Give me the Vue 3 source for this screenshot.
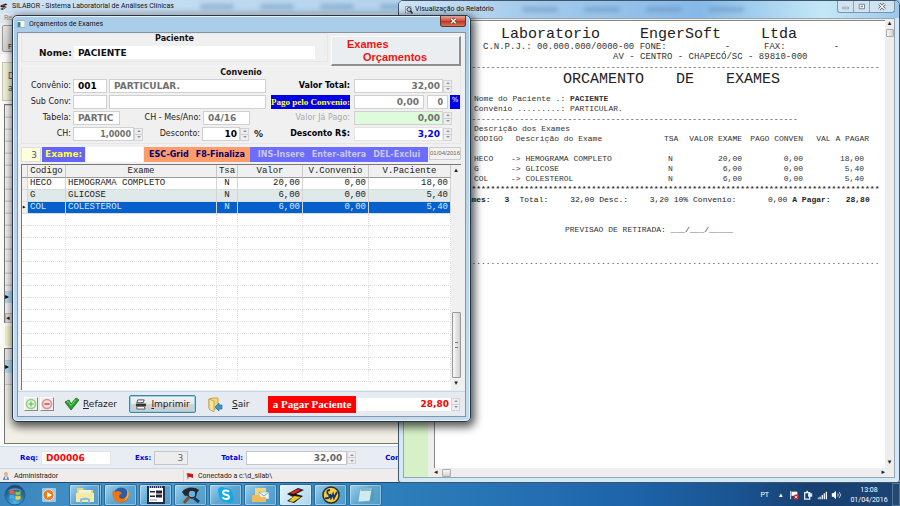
<script setup>
import { reactive } from 'vue'

const form = reactive({
  nome: 'PACIENTE',
  convCod: '001',
  convNome: 'PARTICULAR.',
  subCod: '',
  subNome: '',
  tabela: 'PARTIC',
  mesAno: '04/16',
  ch: '1,0000',
  desconto: '10',
  valorTotal: '32,00',
  pagoConv: '0,00',
  pagoPerc: '0',
  jaPago: '0,00',
  descontoRs: '3,20',
  exame: '',
  pagar: '28,80',
  req: 'D00006',
  exs: '3',
  total: '32,00'
})

const exames = [
  { cod: 'HECO', nome: 'HEMOGRAMA COMPLETO', tsa: 'N', valor: '20,00', conv: '0,00', pac: '18,00' },
  { cod: 'G', nome: 'GLICOSE', tsa: 'N', valor: '6,00', conv: '0,00', pac: '5,40' },
  { cod: 'COL', nome: 'COLESTEROL', tsa: 'N', valor: '6,00', conv: '0,00', pac: '5,40' }
]
const selected = 2
const emptyRows = 14
</script>

<template>
  <div class="desktop">
    <main class="app">
      <header class="app-title">
        <svg class="ico8" viewBox="0 0 16 16"><path d="M1 5L11 1 15 3 8 6 14 8 5 14 0 12 7 9 1 8z" fill="#222" /><path d="M2 5L11 2 7 6z" fill="#e02020" /><path d="M7 9L13 8 4 13z" fill="#f0c020" /></svg>
        <span>SILABOR - Sistema Laboratorial de Análises Clínicas</span>
        <i class="smudge"></i><i class="smudge"></i><i class="smudge"></i><i class="smudge"></i>
      </header>
      <nav class="app-menu">Re</nav>
      <div class="app-tools"><span class="tool">F</span></div>
      <div class="app-info">D<br />a</div>
      <div class="app-list">
        <div class="list-rows"></div>
        <div class="marker">▸</div>
        <div class="list-gap"></div>
        <div class="list-scroll">◂</div>
      </div>
      <div class="app-strip"></div>
      <div class="app-canvas"><div class="canvas-head"></div><div class="marker">▸</div><div class="canvas-head"></div></div>
      <section class="app-totals">
        <label for="req">Req:</label><input id="req" v-model="form.req" class="f-req" />
        <label for="exs" class="l-exs">Exs:</label><input id="exs" v-model="form.exs" class="f-exs" />
        <label for="total" class="l-total">Total:</label><input id="total" v-model="form.total" class="f-total" />
        <span class="spin"><button aria-label="Mais"></button><button aria-label="Menos"></button></span>
        <span class="l-con">Con</span>
      </section>
      <footer class="app-status">
        <div class="st-user">
          <svg class="ico8" viewBox="0 0 16 16"><circle cx="8" cy="4" r="4" fill="#e8b070" /><path d="M2 16c0-6 3-8 6-8s6 2 6 8z" fill="#6f8fd0" /><path d="M8 8l-2 3 2 5 2-5z" fill="#fff" /></svg>
          Administrador
        </div>
        <div class="st-conn">
          <svg class="ico8" viewBox="0 0 16 16"><path d="M2 2l12 2v8L8 10l-5 1z" fill="#d01818" /><path d="M2 2l2 13" stroke="#777" stroke-width="1.5" /></svg>
          Conectado a c:\d_silab\
        </div>
      </footer>
    </main>

    <section class="report">
      <header class="rep-title">
        <svg class="ico8" viewBox="0 0 16 16"><path d="M1 1h11v13H1z" fill="#e9eef5" stroke="#557" /><circle cx="8" cy="7" r="4" fill="#bfe0f5" stroke="#223" stroke-width="1.6" /><path d="M11 10l4 5" stroke="#223" stroke-width="2.5" /></svg>
        <span>Visualização do Relatório</span>
        <div class="rep-smudges"><i class="smudge"></i><i class="smudge"></i><i class="smudge"></i><i class="smudge"></i></div>
        <div class="win-btns">
          <button aria-label="Minimizar"><svg viewBox="0 0 20 12"><path d="M6 7h8v2H6z" fill="#fff" stroke="#678" stroke-width=".8" /></svg></button>
          <button aria-label="Maximizar"><svg viewBox="0 0 20 12"><path d="M7 3h7v6H7zM9.500 5.500h2v1h-2z" fill="#fff" stroke="#567" /></svg></button>
          <button aria-label="Fechar"><svg viewBox="0 0 20 12"><path d="M7 3l6 6M13 3l-6 6" stroke="#567" stroke-width="3" /><path d="M7 3l6 6M13 3l-6 6" stroke="#fff" stroke-width="1.200" /></svg></button>
        </div>
      </header>
      <div class="rep-body">
        <aside class="rep-side"></aside>
        <div class="rep-view">
          <article class="paper">
            <h1 class="r-lab"><span>Laboratorio</span><span>EngerSoft</span><span>Ltda</span></h1>
            <p class="r-cnpj"><span>C.N.P.J.: 00.000.000/0000-00 FONE:</span><span>-</span><span>FAX:</span><span>-</span></p>
            <p class="r-addr">AV - CENTRO - CHAPECÓ/SC - 89810-000</p>
            <div class="r-line">{{ '-'.repeat(88) }}</div>
            <h2 class="r-orc"><span>ORCAMENTO</span><span>DE</span><span>EXAMES</span></h2>
            <p class="r-ind">Nome do Paciente .: <b>PACIENTE</b></p>
            <p class="r-ind">Convênio .........: PARTICULAR.</p>
            <div class="r-line">{{ '-'.repeat(71) }}</div>
            <p class="r-ind">Descrição dos Exames</p>
            <table class="r-table">
              <thead>
                <tr><th class="c1">CODIGO</th><th class="c2">&nbsp;Descrição do Exame</th><th class="c3">TSA</th><th class="c4">VALOR EXAME</th><th class="c5">PAGO CONVEN</th><th class="c6">VAL A PAGAR</th></tr>
              </thead>
              <tbody>
                <tr v-for="e in exames" :key="e.cod">
                  <td>{{ e.cod }}</td><td>-&gt; {{ e.nome }}</td><td>{{ e.tsa }}</td><td class="n">{{ e.valor }}</td><td class="n">{{ e.conv }}</td><td class="n last">{{ e.pac }}</td>
                </tr>
              </tbody>
            </table>
            <div class="r-line stars">{{ '*'.repeat(88) }}</div>
            <p class="r-total">
              <b>Exames:</b><b>3</b><span>Total:</span><span class="t1">32,00</span><span>Desc.:</span><span class="t2">3,20 10%</span><span>Convenio:</span><span class="t3">0,00</span><b>A Pagar:</b><b>28,80</b>
            </p>
            <p class="r-prev">PREVISAO DE RETIRADA: ___/___/_____</p>
            <div class="r-line dots">{{ '.'.repeat(88) }}</div>
          </article>
          <div class="hscroll"><span>◂</span><i></i><span class="end">▸</span></div>
        </div>
        <div class="vscroll"><span>▴</span><i></i><span class="end">▾</span></div>
      </div>
    </section>

    <section class="dialog">
      <header class="dlg-title">
        <svg class="ico8" viewBox="0 0 16 14"><path d="M0 0h16v14H0z" fill="#f4f8fa" stroke="#789" /><path d="M1 3h6v10H1z" fill="#3a8a80" /></svg>
        <span>Orçamentos de Exames</span>
        <button class="close" aria-label="Fechar"><svg viewBox="0 0 26 11"><path d="M11 3l5 5M16 3l-5 5" stroke="#633" stroke-width="3" /><path d="M11 3l5 5M16 3l-5 5" stroke="#fff" stroke-width="1.500" /></svg></button>
      </header>
      <div class="client">
        <div class="top">
          <fieldset class="pac">
            <div class="cap">Paciente</div>
            <div class="pac-row"><label for="nome">Nome:</label><input id="nome" v-model="form.nome" /></div>
          </fieldset>
          <button class="banner"><span>Exames</span><span class="b2">Orçamentos</span></button>
        </div>
        <fieldset class="conv">
          <div class="cap">Convenio</div>
          <div class="cols">
            <div class="left">
              <div class="row"><label class="lab" for="cc">Convênio:</label><input id="cc" v-model="form.convCod" class="w34" /><input v-model="form.convNome" aria-label="Nome do convênio" class="grow dis" /></div>
              <div class="row"><label class="lab" for="sc">Sub Conv:</label><input id="sc" v-model="form.subCod" class="w34 dis" /><input v-model="form.subNome" aria-label="Nome do sub convênio" class="grow dis" /></div>
              <div class="row"><label class="lab" for="tb">Tabela:</label><input id="tb" v-model="form.tabela" class="w46 dis" /><label class="lab2" for="ma">CH - Mes/Ano:</label><input id="ma" v-model="form.mesAno" class="w46 dis" /></div>
              <div class="row">
                <label class="lab" for="ch">CH:</label><span class="num w70"><input id="ch" v-model="form.ch" class="small dis" /><span class="spin"><button aria-label="Mais"></button><button aria-label="Menos"></button></span></span>
                <label class="lab3" for="de">Desconto:</label><span class="num w46"><input id="de" v-model="form.desconto" /><span class="spin"><button aria-label="Mais"></button><button aria-label="Menos"></button></span></span><b class="pct">%</b>
              </div>
            </div>
            <div class="right">
              <div class="row"><label class="rl" for="vt">Valor Total:</label><span class="num w98"><input id="vt" v-model="form.valorTotal" class="dis" /><span class="spin"><button aria-label="Mais"></button><button aria-label="Menos"></button></span></span></div>
              <div class="row"><label class="rl pago" for="pc">Pago pelo Convenio:</label><input id="pc" v-model="form.pagoConv" class="w70 dis r" /><input v-model="form.pagoPerc" aria-label="Percentual" class="w21 small dis r" /><span class="bluepct">%</span></div>
              <div class="row"><label class="rl faded" for="jp">Valor Já Pago:</label><span class="num w98"><input id="jp" v-model="form.jaPago" class="dis green" /><span class="spin"><button aria-label="Mais"></button><button aria-label="Menos"></button></span></span></div>
              <div class="row"><label class="rl" for="dr">Desconto R$:</label><span class="num w98"><input id="dr" v-model="form.descontoRs" class="blue" /><span class="spin"><button aria-label="Mais"></button><button aria-label="Menos"></button></span></span></div>
            </div>
          </div>
        </fieldset>
        <div class="bar">
          <span class="count">3</span>
          <label class="exl" for="ex">Exame:</label>
          <input id="ex" v-model="form.exame" class="exi" />
          <span class="keys1"><span>ESC-Grid</span><span>F8-Finaliza</span></span>
          <span class="keys2"><span>INS-Insere</span><span>Enter-altera</span><span>DEL-Exclui</span></span>
          <span class="date">01/04/2016</span>
        </div>
        <div class="gridbox">
          <table class="grid">
            <colgroup><col class="g0" /><col class="g1" /><col /><col class="g3" /><col class="g4" /><col class="g5" /><col class="g6" /></colgroup>
            <thead><tr><th></th><th>Codigo</th><th>Exame</th><th>Tsa</th><th>Valor</th><th>V.Convenio</th><th>V.Paciente</th></tr></thead>
            <tbody>
              <tr v-for="(e, i) in exames" :key="e.cod" :class="{ alt: i === 1, sel: i === selected }">
                <td class="ind">{{ i === selected ? '▸' : '' }}</td><td>{{ e.cod }}</td><td>{{ e.nome }}</td><td class="c">{{ e.tsa }}</td><td class="r">{{ e.valor }}</td><td class="r">{{ e.conv }}</td><td class="r">{{ e.pac }}</td>
              </tr>
              <tr v-for="n in emptyRows" :key="n" class="empty"><td></td><td></td><td></td><td></td><td></td><td></td><td></td></tr>
            </tbody>
          </table>
          <div class="gscroll"><span>▴</span><i></i><span>▾</span></div>
        </div>
        <div class="foot">
          <button class="mini" aria-label="Adicionar"><svg viewBox="0 0 12 12"><circle cx="6" cy="6" r="4.500" fill="#e4f5de" stroke="#8fcf80" stroke-width="1.500" /><path d="M6 3.500v5M3.500 6h5" stroke="#7cc46c" stroke-width="1.500" /></svg></button>
          <button class="mini" aria-label="Remover"><svg viewBox="0 0 12 12"><circle cx="6" cy="6" r="4.500" fill="#f5dcdc" stroke="#d99090" stroke-width="1.500" /><path d="M3.500 6h5" stroke="#cc7070" stroke-width="2" /></svg></button>
          <button class="flat refazer"><svg viewBox="0 0 15 14"><path d="M1 5l4-2 2 4 5-6 3 2-8 10z" fill="#27a22a" stroke="#126a16" stroke-width=".8" /><path d="M3 5l1.500-.5 2.500 4 5-6" fill="none" stroke="#7be070" /></svg><span><u>R</u>efazer</span></button>
          <button class="print"><svg viewBox="0 0 12 12"><path d="M3 1h7l-1 3H2z" fill="#fff" stroke="#444" /><path d="M1 5h11v3H1z" fill="#333" /><path d="M2 8h8l1 3H2z" fill="#f4f4f4" stroke="#555" /></svg><span><u>I</u>mprimir</span></button>
          <button class="flat sair"><svg viewBox="0 0 15 15"><path d="M1 2l4-1h5v11H5l-4-1z" fill="#f2d777" stroke="#b89a40" stroke-width=".8" /><path d="M1 2l5 2v11l-5-3z" fill="#f8e49a" stroke="#b89a40" stroke-width=".8" /><path d="M7 10l4-4v2h3v4h-3v2z" fill="#3c92cc" stroke="#1d659c" stroke-width=".6" /></svg><span><u>S</u>air</span></button>
          <label class="pagar" for="pg">a Pagar Paciente</label>
          <span class="num payn"><input id="pg" v-model="form.pagar" class="red" /><span class="spin"><button aria-label="Mais"></button><button aria-label="Menos"></button></span></span>
        </div>
      </div>
    </section>

    <footer class="taskbar">
      <button class="orb" aria-label="Iniciar"><svg viewBox="0 0 22 22"><defs><radialGradient id="og" cx=".5" cy=".9" r=".9"><stop offset="0" stop-color="#48b8ec" /><stop offset="1" stop-color="#153f70" /></radialGradient></defs><circle cx="11" cy="11" r="10" fill="url(#og)" stroke="#2a6090" /><path d="M5.500 7c2-1 3-1 5 0v3.500c-2-1-3-1-5 0z" fill="#e8602c" /><path d="M11.500 7.300c2 .8 3 .8 5-.3v3.500c-2 1-3 1-5 .2z" fill="#8cc63e" /><path d="M5.500 11.500c2-1 3-1 5 0V15c-2-1-3-1-5 0z" fill="#4aa8e8" /><path d="M11.500 11.800c2 .8 3 .8 5-.3V15c-2 1-3 1-5 .2z" fill="#f8cc3c" /><path d="M3 8a9 7 0 0 1 16 0c-5-3-11-3-16 0z" fill="#fff" opacity=".35" /></svg></button>
      <button class="play" aria-label="Player"><svg viewBox="0 0 16 16"><rect x="1" y="1" width="14" height="14" rx="1" fill="#9cc8e8" /><circle cx="7.500" cy="8" r="5.500" fill="#ef7a1a" stroke="#fff" stroke-width=".6" /><path d="M6 5l5 3-5 3z" fill="#fff" /></svg></button>
      <button class="tb stack" aria-label="Explorer"><svg viewBox="0 0 20 18"><path d="M2 2h6l1 2h9v12H2z" fill="#f2d375" /><path d="M4 4h12v5H4z" fill="#e8f4dc" /><path d="M1 7h18v9H1z" fill="#fae9a4" /><path d="M5 17v-4q5-3 10 0v4h-2v-3H7v3z" fill="#7cc3ea" /></svg></button>
      <button class="tb" aria-label="Firefox"><svg viewBox="0 0 20 18"><circle cx="10" cy="9" r="7.500" fill="#2b5ea8" /><path d="M2 4c1 2 2 2 4 1 3 0 4 1 5 3-2 0-3 1-3 3 2 3 6 2 8-2 1-3 0-5-1-6 3 2 4 6 2 9-3 6-11 6-14 1-2-3-2-6-1-9z" fill="#ee7416" /><path d="M16 3c3 4 2 10-3 12 3-3 4-7 3-12z" fill="#f9b52c" /></svg></button>
      <button class="tb" aria-label="Formulário"><svg viewBox="0 0 20 18"><path d="M2 1h16v16H2z" fill="#fff" stroke="#222a50" stroke-width="2" /><path d="M3 1h14" stroke="#ccc" stroke-width="1.500" stroke-dasharray="1 1" /><path d="M4 5h5v1.500H4zM4 9.500h5V11H4z" fill="#223" /><path d="M10 6h6M10 10h6" stroke="#223" stroke-width="3" /><path d="M4 14h7" stroke="#99a" /></svg></button>
      <button class="tb" aria-label="Pesquisa"><svg viewBox="0 0 20 18"><path d="M1 6c3-5 12-6 17-2l-3 4-6 1-5 1z" fill="#26282f" /><circle cx="11" cy="8" r="4" fill="#6ab1dc" stroke="#222" stroke-width="1.500" /><path d="M8 11l-5 6" stroke="#8a4a25" stroke-width="3" /><path d="M13 12l5 4" stroke="#273858" stroke-width="3" /></svg></button>
      <button class="tb" aria-label="Skype"><svg viewBox="0 0 20 18"><circle cx="10" cy="9" r="7" fill="#13a9e6" /><circle cx="6" cy="5" r="4" fill="#13a9e6" /><circle cx="14" cy="13" r="4" fill="#13a9e6" /><path d="M13 6c-1-2-6-2-6 .5 0 3 6 1.500 6 4.500 0 2.500-5 2.500-6.500.2" fill="none" stroke="#fff" stroke-width="2" /></svg></button>
      <button class="tb" aria-label="E-mail"><svg viewBox="0 0 20 18"><path d="M4 2h11v11H4z" fill="#f3d67c" /><path d="M8 6h10v7H8z" fill="#e9f4fb" stroke="#7aa" stroke-width=".5" /><path d="M8 6l5 4 5-4" fill="none" stroke="#7ab" /><path d="M1 9h7l2 2h5v5H1z" fill="#f0b95c" /></svg></button>
      <button class="tb active" aria-label="Silabor"><svg viewBox="0 0 20 18"><path d="M1 8L12 2l6 2-8 4 7 2-9 7-7-2 6-4z" fill="#1b1616" /><path d="M3 7l9-4 3 1-7 4z" fill="#dd2a1c" /><path d="M8 10l7 1-8 5-4-1z" fill="#ebcb22" /></svg></button>
      <button class="tb" aria-label="SW"><svg viewBox="0 0 20 18"><circle cx="10" cy="9" r="8" fill="#f6cd38" stroke="#2b2b24" stroke-width="1.500" /><path d="M9 4c-4 0-3 4-1 5s0 4-4 3M9 8l1 4 2-4 1 4 3-6" fill="none" stroke="#17356c" stroke-width="1.800" /></svg></button>
      <button class="tb" aria-label="Notas"><svg viewBox="0 0 20 18"><path d="M4 3l12-1-2 13-12 1z" fill="#cfeaf0" stroke="#6aa4b8" stroke-width=".6" /><path d="M14 15l2-13 2 3v10z" fill="#5f97ad" /><path d="M5 3l10-1-.3 3H4.700z" fill="#82b8c8" /></svg></button>
      <div class="tray">
        <span class="pt">PT</span>
        <span class="up">▴</span>
        <svg viewBox="0 0 12 12"><path d="M2 1v10" stroke="#fff" /><path d="M3 2h7v5H3z" fill="#fff" /><circle cx="8.500" cy="8.500" r="3.200" fill="#d32020" /><path d="M7 7l3 3M10 7l-3 3" stroke="#fff" /></svg>
        <svg viewBox="0 0 12 12"><path d="M2 3h6v8H2z" fill="none" stroke="#e8eef4" stroke-width="1.500" /><path d="M4 1h2v2H4zM6 4h5v4H6z" fill="#dfe7ef" /><path d="M8 8v3" stroke="#dfe7ef" /></svg>
        <svg viewBox="0 0 12 12"><path d="M1 9h1v2H1zM3 8h1.500v3H3zM5.500 6H7v5H5.500zM8 4h1.500v7H8zM10.500 2H12v9h-1.500z" fill="#fff" /></svg>
        <svg viewBox="0 0 12 12"><path d="M1 4h2l3-3v10L3 8H1z" fill="#fff" /><path d="M8 4q1.500 2 0 4M10 2.500q3 3.500 0 7" fill="none" stroke="#dce8f4" /></svg>
        <div class="clock">13:08<br />01/04/2016</div>
      </div>
      <button class="peek" aria-label="Mostrar área de trabalho"></button>
    </footer>
  </div>
</template>

<style>
body { overflow: hidden; }
</style>

<style scoped>
* { box-sizing: border-box; }
.desktop { position: relative; height: 100vh; display: flex; flex-direction: column; overflow: hidden; font-family: "DejaVu Sans", sans-serif; font-size: 8px; line-height: 10px; color: #222; }
p, h1, h2 { margin: 0; font-weight: normal; }
button, input { font: inherit; color: inherit; margin: 0; padding: 0; border: 0; border-radius: 0; min-width: 0; }
button { background: none; }
svg { display: block; flex: none; }
fieldset { border: 1px solid #e6e6e6; margin: 0; padding: 0; min-width: 0; }
i { display: block; font-style: normal; }
.ico8 { width: 8px; height: 8px; }

/* main application */
.app { flex: 1; min-height: 0; display: flex; flex-direction: column; background: #fbfcfa; }
.app-title { flex: none; height: 13px; display: flex; align-items: center; gap: 4px; background: linear-gradient(90deg, #cfe3f4, #b4d4ee 40%, #9ec6ea); font: 7px/13px Roboto, sans-serif; color: #111; }
.smudge { width: 34px; height: 5px; margin-left: 22px; border-radius: 3px; background: #5f86ac; opacity: .45; filter: blur(2px); }
.app-menu { flex: none; height: 10px; padding-left: 4px; font: 7px/10px Roboto, sans-serif; color: #888; background: #dfe6ee; }
.app-tools { flex: none; height: 31px; padding: 2px; background: #ececec; }
.tool { display: block; width: 40px; height: 27px; padding: 17px 0 0 5px; border: 1px solid #999; border-radius: 2px; background: linear-gradient(#e6e6e6, #cfcfcf); font: 7px/9px Roboto, sans-serif; }
.app-info { flex: none; height: 39px; margin: 8px 2px 3px; padding: 8px 5px; border: 1px solid #c8c8b0; background: #efeed8; line-height: 12px; color: #555; }
.app-list { flex: none; height: 219px; margin-left: 4px; border: 1px solid #777; border-width: 1px 0 0 1px; background: #f2f2f2; display: flex; flex-direction: column; }
.list-rows { flex: 1; width: 9px; background: repeating-linear-gradient(#d2d2d2 0 1px, #f2f2f2 1px 11px, #e0e0e0 11px 12px); border-right: 1px solid #ccc; }
.marker { width: 9px; height: 12px; background: #b4dcee; color: #000; font-size: 8px; line-height: 12px; }
.list-gap { height: 10px; }
.list-scroll { height: 10px; width: 12px; background: #ddd; border: 1px solid #bbb; font-size: 7px; line-height: 8px; }
.app-strip { flex: none; height: 20px; margin: 3px 0 2px 5px; background: #f4f3c6; }
.app-canvas { flex: 1; margin: 0 0 2px 4px; border: 1px solid #777; border-width: 1px 0 1px 1px; background: #f2efe4; }
.canvas-head { width: 9px; height: 12px; background: #e8e8e8; border-bottom: 1px solid #c6c6c6; }
.app-totals { flex: none; height: 23px; display: flex; align-items: center; padding-left: 20px; border: 1px solid #c6dcec; border-width: 1px 0; background: #e7edf2; font-size: 7px; font-weight: bold; color: #0000e0; }
.app-totals input { height: 14px; border: 1px solid #c6c6c6; background: #fff; color: #666; text-align: right; padding: 0 4px; font-size: 9px; margin-left: 3px; }
.app-totals .f-req { width: 70px; color: #f00; text-align: left; border-color: #e4e4e4; }
.app-totals .f-exs { width: 34px; background: #ededed; font-weight: normal; }
.app-totals .f-total { width: 101px; }
.l-exs { margin-left: 24px; }
.l-total { margin-left: 33px; }
.l-con { margin-left: 29px; }
.app-status { flex: none; height: 13px; display: flex; align-items: center; background: #f0ecec; font: 7px/12px Roboto, sans-serif; }
.st-user, .st-conn { display: flex; align-items: center; gap: 4px; padding-left: 2px; }
.st-user { width: 184px; border-right: 1px solid #d8d4d4; }

/* spin buttons */
.spin { flex: none; width: 9px; height: 13px; display: flex; flex-direction: column; background: #eee; border: 1px solid #d4d4d4; }
.spin button { flex: 1; display: flex; align-items: center; justify-content: center; }
.spin button::before { content: ""; border: 2px solid transparent; border-top: 0; border-bottom-color: #8d95a8; }
.spin button + button { border-top: 1px solid #ccc; }
.spin button + button::before { border: 2px solid transparent; border-bottom: 0; border-top-color: #8d95a8; }

/* report preview window */
.report { position: absolute; left: 398px; right: 0; top: 0; bottom: 23px; display: flex; flex-direction: column; border: 1px solid #40556a; border-radius: 5px 5px 3px 3px; background: #d5e8f5; padding: 0 4px 4px; }
.rep-title { flex: none; height: 17px; margin: 0 -4px; padding-left: 6px; display: flex; align-items: center; gap: 2px; background: linear-gradient(90deg, #cfe4f4, #a4cbec 25%, #86b9e8 60%, #c4e8f6 85%, #9cc8ee); border-radius: 4px 4px 0 0; font: 7px/17px Roboto, sans-serif; color: #111; }
.rep-smudges { flex: 1; display: flex; }
.rep-smudges .smudge { margin-left: 26px; width: 36px; }
.win-btns { display: flex; align-self: flex-start; margin-right: 4px; border: 1px solid #7e95a8; border-top: 0; border-radius: 0 0 3px 3px; background: #cfe3f0; }
.win-btns button { width: 16px; height: 11px; border-right: 1px solid #8ea3b4; }
.win-btns button:last-child { width: 24px; border: 0; }
.win-btns svg { width: 100%; height: 11px; }
.rep-body { flex: 1; min-height: 0; display: flex; border: 1px solid #98a4ae; background: #eee; }
.rep-side { width: 24px; flex: none; background: #d6f0c8; }
.rep-view { flex: 1; min-width: 0; margin-left: 6px; display: flex; flex-direction: column; }
.paper { flex: 1; min-height: 0; overflow: hidden; margin-top: 1px; padding: 7px 2px 0 22px; border: 1px solid #888; border-width: 1px 0 0 1px; background: #fff; font: 8px/10px "Liberation Mono", monospace; color: #333; white-space: pre; }
.r-lab, .r-orc { display: flex; font-size: 15px; line-height: 14px; color: #222; }
.r-lab { margin-left: 44px; gap: 40px; }
.r-orc { margin: 1px 0 7px 106px; gap: 32px; }
.r-cnpj { display: flex; font-size: 9px; padding-left: 26px; }
.r-cnpj span:nth-child(2) { margin-left: 58px; }
.r-cnpj span:nth-child(3) { margin-left: 34px; }
.r-cnpj span:nth-child(4) { margin-left: 48px; }
.r-addr { font-size: 9px; padding-left: 156px; }
.r-line { height: 10px; color: #333; }
.r-line.stars { font-weight: bold; }
.r-line.dots { margin-top: 22px; }
.r-ind { padding-left: 17px; }
.r-table { table-layout: fixed; border-collapse: collapse; margin-left: 17px; width: 395px; }
.r-table th, .r-table td { padding: 0; height: 10px; font-weight: normal; text-align: left; }
.r-table thead th { height: 20px; vertical-align: top; }
.r-table .c1 { width: 37px; }
.r-table .c3 { width: 17px; }
.r-table .c4, .r-table .c5 { width: 61px; text-align: right; }
.r-table .c6 { width: 66px; text-align: right; }
.r-table td:nth-child(3) { padding-left: 4px; }
.r-table .n { text-align: right; }
.r-table .last { padding-right: 5px; }
.r-total { display: flex; gap: 5px; margin-top: 1px; color: #222; }
.r-total > :nth-child(2) { margin: 0 5px 0 9px; }
.r-total .t1 { width: 41px; text-align: right; }
.r-total .t2 { width: 55px; text-align: right; }
.r-total .t3 { width: 46px; text-align: right; }
.r-total > :last-child { margin-left: 10px; }
.r-prev { margin-top: 20px; padding-left: 108px; }
.hscroll { flex: none; height: 9px; display: flex; align-items: center; gap: 4px; background: #eee; font-size: 7px; line-height: 9px; }
.hscroll i { width: 9px; height: 8px; border: 1px solid #aaa; border-radius: 1px; background: linear-gradient(#f8f8f8, #d0d0d0); }
.end { margin-left: auto; }
.vscroll { width: 9px; display: flex; flex-direction: column; align-items: center; gap: 1px; background: #eee; font-size: 7px; line-height: 9px; padding-bottom: 10px; }
.vscroll i { width: 8px; height: 8px; border: 1px solid #aaa; border-radius: 1px; background: linear-gradient(90deg, #f8f8f8, #d0d0d0); }
.vscroll .end { margin: auto 0 0; }

/* budget dialog */
.dialog { position: absolute; left: 12px; top: 15px; width: 51%; border: 1px solid #26384a; border-radius: 5px; background: linear-gradient(#a9cce9, #b4d4ec 30%, #c4dcee); padding: 0 4px 4px; box-shadow: inset 0 0 0 1px #e3f1fb, 2px 3px 8px 2px rgba(0, 0, 0, .65); }
.dlg-title { height: 16px; display: flex; align-items: center; gap: 4px; font: 7px/16px Roboto, sans-serif; color: #111; }
.close { margin-left: auto; align-self: flex-start; width: 26px; height: 11px; border: 1px solid #63332c; border-top: 0; border-radius: 0 0 3px 3px; background: linear-gradient(#e3a79a, #c9503c 50%, #b93420 52%, #d8745a); }
.close svg { width: 100%; height: 10px; }
.client { border: 1px solid #8496a6; background: #f0f0f0; padding: 0 4px 0 3px; }
.top { display: flex; align-items: flex-start; gap: 3px; height: 33px; }
.pac { flex: 1; height: 29px; }
.cap { text-align: center; font-weight: bold; color: #111; line-height: 10px; }
.pac-row { display: flex; align-items: center; gap: 3px; padding: 2px 12px 0 17px; font-weight: bold; color: #111; }
.pac-row label { width: 32px; text-align: right; font-size: 9px; }
.pac-row input { flex: 1; height: 13px; background: #fff; padding: 0 4px; font-size: 9px; }
.banner { flex: none; width: 130px; height: 30px; margin-top: 3px; padding: 1px 15px; display: flex; flex-direction: column; align-items: flex-start; background: #ebeef1; border: 1px solid #fafafa; border-right: 2px solid #8e8e8e; border-bottom: 2px solid #8e8e8e; font: bold 11px/13px "Liberation Sans", sans-serif; color: #f01414; }
.b2 { padding-left: 16px; }
.conv { height: 78px; border-top-color: #f4f4f4; }
.conv .cap { line-height: 11px; }
.cols { display: flex; }
.left { flex: 1; min-width: 0; }
.right { flex: none; width: 189px; }
.row { display: flex; align-items: center; height: 16px; gap: 2px; }
.row input { height: 14px; background: #fff; border: 1px solid #d0d0d0; padding: 0 4px; font-size: 9px; font-weight: bold; color: #000; }
.row input.dis { color: #707070; }
.row input.small { font-size: 8px; }
.row input.r { text-align: right; }
.row input.green { background: #defbdc; }
.row input.blue { color: #00e; border-color: #e4e4e4; }
.lab { width: 49px; text-align: right; }
.lab2 { width: 79px; text-align: right; }
.lab3 { width: 55px; text-align: right; }
.w34 { width: 34px; flex: none; }
.w46 { width: 47px; flex: none; }
.w70 { width: 70px; flex: none; }
.w98 { width: 98px; flex: none; }
.w21 { width: 21px; flex: none; margin-left: 1px; }
.grow { flex: 1; }
.left .row { padding-right: 5px; }
.num { display: flex; align-items: center; }
.num input { flex: 1; text-align: right; padding-right: 2px; }
.pct { margin-left: 3px; font-size: 9px; }
.rl { width: 79px; text-align: right; font-weight: bold; color: #000; margin-right: 2px; white-space: nowrap; }
.rl.pago { height: 14px; background: #0000e8; color: #ffff30; font: bold 9px/14px "Liberation Serif", serif; text-align: center; }
.rl.faded { font-weight: normal; color: #aaa; }
.bluepct { background: #0000e8; color: #fff; width: 10px; height: 14px; text-align: center; font-size: 7px; line-height: 10px; }
.bar { display: flex; height: 15px; margin-top: 3px; line-height: 15px; font-weight: bold; }
.count { width: 20px; margin-right: 1px; background: #ffffdc; border: 1px solid #ddd; text-align: right; padding-right: 3px; font-weight: normal; font-size: 9px; line-height: 14px; color: #555; }
.exl { width: 43px; padding-left: 3px; background: #6464fa; color: #ff3; font-size: 9px; }
.exi { width: 57px; margin: 0 1px; background: #fff; }
.keys1 { width: 106px; display: flex; justify-content: center; gap: 7px; background: #ff9c6c; color: #00006c; }
.keys2 { flex: 1; display: flex; justify-content: center; gap: 7px; background: #6c6cff; color: #c8c8e0; white-space: nowrap; }
.date { width: 32px; margin-left: 1px; height: 13px; border: 1px solid #ccc; background: #f2f2f2; text-align: center; font: 6px/11px "Liberation Sans", sans-serif; color: #666; }
.gridbox { display: flex; margin-top: 2px; height: 226px; background: #fff; border: 1px solid #777; border-right: 0; border-bottom: 0; }
.grid { flex: 1; align-self: flex-start; table-layout: fixed; border-collapse: separate; border-spacing: 0; width: 100%; font: 9px/11px "Liberation Mono", monospace; color: #222; }
.g0 { width: 6px; }
.g1 { width: 38px; }
.g3 { width: 21px; }
.g4 { width: 65px; }
.g5 { width: 66px; }
.g6 { width: 82px; }
.grid th { height: 13px; padding: 0; font-weight: normal; background: #f0f0f0; border-right: 1px solid #c8c8c8; border-bottom: 1px solid #999; }
.grid td { height: 12px; padding: 0 2px; border-right: 1px solid #d4d4d4; border-bottom: 1px solid #d8dcdc; white-space: nowrap; }
.grid td.ind { padding: 0; background: #f0f0f0; color: #000; font-size: 7px; }
.grid .c { text-align: center; }
.grid .r { text-align: right; }
.alt td { background: #e0e9e9; }
.sel td { background: #0560cc; color: #d8eaff; }
.empty td { border-right: 1px dotted #e2e2e2; border-bottom: 1px dotted #dedede; }
.empty td:first-child { border-right: 0; }
.gscroll { flex: none; width: 10px; display: flex; flex-direction: column; align-items: center; background: #f0f0f0; font-size: 7px; line-height: 11px; padding-bottom: 1px; }
.gscroll i { margin-top: auto; width: 9px; height: 66px; border: 1px solid #999; border-radius: 1px; background: linear-gradient(90deg, #fafafa, #cfcfcf); display: flex; align-items: center; justify-content: center; }
.gscroll i::before { content: ""; width: 3px; height: 4px; border: 1px solid #777; border-width: 1px 0; }
.foot { display: flex; align-items: center; height: 25px; margin: 1px -4px 0 -3px; padding: 0 5px 0 6px; background: #e5ebf0; border-top: 1px solid #c0d8ea; font-size: 9px; }
.mini { width: 14px; height: 14px; margin-right: 2px; border: 1px solid #fff; border-right-color: #888; border-bottom-color: #888; background: #eee; }
.mini svg { width: 12px; height: 12px; }
.flat { display: flex; align-items: center; }
.refazer { margin-left: 8px; gap: 4px; }
.refazer svg { width: 15px; height: 14px; }
.print { display: flex; align-items: center; justify-content: center; gap: 5px; width: 67px; height: 18px; margin-left: 12px; border: 1px solid #4286a8; border-radius: 2px; box-shadow: inset 0 0 0 1px #8fd0ec; background: linear-gradient(#f2f2f2, #e8e8e8 48%, #d4d4d4 50%, #ccc); }
.print svg { width: 11px; height: 11px; }
.sair { margin-left: 12px; gap: 9px; }
.sair svg { width: 15px; height: 15px; }
.pagar { margin-left: auto; width: 88px; height: 17px; background: #f00; color: #fff; text-align: center; font: bold 11px/17px "Liberation Serif", serif; }
.payn { width: 102px; margin-left: 2px; }
.payn input { height: 13px; background: #fff; font-weight: bold; font-size: 9px; color: #f00; }

/* taskbar */
.taskbar { flex: none; height: 24px; display: flex; align-items: center; background: linear-gradient(90deg, #3a86be, #4a98cc 20%, #2f80bc 42%, #1d64aa 70%, #1a5490 82%, #173f70 90%, #1b4474); border-top: 1px solid #20486c; color: #fff; }
.orb { width: 22px; margin-left: 4px; }
.orb svg { width: 22px; height: 22px; }
.play { width: 16px; margin: 0 12px 0 15px; }
.play svg { width: 16px; height: 16px; }
.tb { width: 33px; height: 22px; margin-right: 2px; display: flex; align-items: center; justify-content: center; border: 1px solid #2a6c98; border-radius: 2px; background: linear-gradient(135deg, #9fd0ea, #5ba6d2 50%, #4f9ccc); box-shadow: inset 0 0 0 1px rgba(255, 255, 255, .35); }
.tb svg { width: 20px; height: 18px; }
.tb.stack { border-right: 3px double #2a6c98; }
.tb.active { background: linear-gradient(135deg, #e6f4fb, #acd6ec); }
.tray { margin-left: auto; display: flex; align-items: center; gap: 4px; font: 7px/10px Roboto, sans-serif; }
.tray svg { width: 10px; height: 10px; }
.pt { margin-right: 6px; }
.up { margin-right: 2px; }
.clock { width: 40px; margin: 0 1px 0 4px; text-align: center; }
.peek { width: 8px; height: 23px; margin-left: 2px; border: 1px solid #4e769c; background: #24486e; }
</style>
